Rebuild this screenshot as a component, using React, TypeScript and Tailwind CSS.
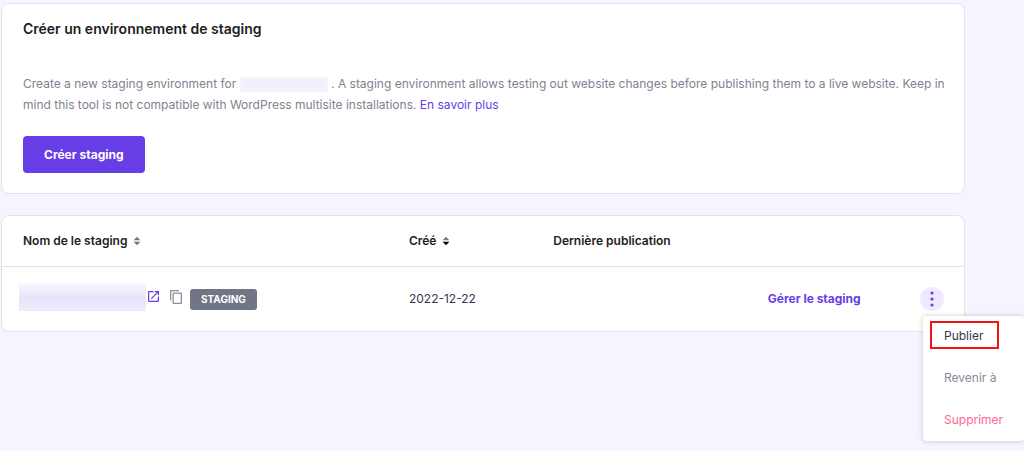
import { useState } from "react";

function SortIcon({ active = false }: { active?: boolean }) {
  return (
    <svg viewBox="0 0 8 10" className="h-2.5 w-2" aria-hidden="true">
      <path d="M4 0.7 7.4 4.2H0.6z" fill="#727586" />
      <path d="M0.6 5.8h6.8L4 9.3z" fill={active ? "#000000" : "#727586"} />
    </svg>
  );
}

function OpenIcon() {
  return (
    <svg viewBox="3 3 18 18" className="size-[11px]" fill="#673de6" aria-hidden="true">
      <path d="M19 19H5V5h7V3H5a2 2 0 0 0-2 2v14a2 2 0 0 0 2 2h14c1.1 0 2-.9 2-2v-7h-2v7zM14 3v2h3.59l-9.83 9.83 1.41 1.41L19 6.41V10h2V3h-7z" />
    </svg>
  );
}

function CopyIcon() {
  return (
    <svg viewBox="2 1 19 22" className="h-[14px] w-3" fill="#8a8c9a" aria-hidden="true">
      <path d="M16 1H4c-1.1 0-2 .9-2 2v14h2V3h12V1zm3 4H8c-1.1 0-2 .9-2 2v14c0 1.1.9 2 2 2h11c1.1 0 2-.9 2-2V7c0-1.1-.9-2-2-2zm0 16H8V7h11v14z" />
    </svg>
  );
}

function RowMenu() {
  const [open, setOpen] = useState(true);
  return (
    <div className="relative size-6">
      <button
        type="button"
        aria-label="Actions"
        aria-expanded={open}
        onClick={() => setOpen(!open)}
        className="flex size-6 items-center justify-center rounded-full bg-[#efe9ff]"
      >
        <svg viewBox="0 0 4 16" className="h-4 w-1" fill="#673de6" aria-hidden="true">
          <circle cx="2" cy="2" r="1.6" />
          <circle cx="2" cy="8" r="1.6" />
          <circle cx="2" cy="14" r="1.6" />
        </svg>
      </button>
      {open && (
        <div className="absolute top-[29px] left-[3px] flex w-[101px] flex-col rounded bg-white shadow-[0_0_5px_rgba(29,30,32,0.22)]">
          <button
            type="button"
            className="mt-[5px] mb-2 ml-[7px] flex h-7 w-[69px] items-center border-2 border-[#f01414] pt-0.5 pl-3 text-[#36344d]"
          >
            Publier
          </button>
          <button type="button" className="flex h-[42px] items-center pl-[21px] text-[#8a8c9a]">
            Revenir à
          </button>
          <button type="button" className="flex h-[42px] items-center pl-[21px] text-[#ff6690]">
            Supprimer
          </button>
        </div>
      )}
    </div>
  );
}

export default function App() {
  return (
    <main className="flex min-h-screen flex-col gap-[21px] bg-[#f4f5ff] pt-[3px] pr-[59px] pl-px font-['Inter','Open_Sans',sans-serif] text-xs text-[#36344d]">
      <section className="rounded-lg border border-[#e3e3ec] bg-white pt-[15px] pr-2 pb-5 pl-[21px]">
        <h1 className="text-sm leading-5 font-semibold text-[#1d1e20]">Créer un environnement de staging</h1>
        <p className="mt-[34px] leading-[21px] text-[#808290]">
          Create a new staging environment for{" "}
          <span className="inline-block h-[15px] w-[88px] bg-[#f1effc] align-middle shadow-[inset_0_0_6px_#faf9ff]" />{" "}
          . A staging environment allows testing out website changes before publishing them to a live website. Keep in
          mind this tool is not compatible with WordPress multisite installations.{" "}
          <a href="#savoir" className="text-[#673de6]">
            En savoir plus
          </a>
        </p>
        <button type="button" className="mt-[21px] h-[37px] rounded bg-[#673de6] px-[21px] font-bold text-white">
          Créer staging
        </button>
      </section>

      <section className="rounded-lg border border-[#e3e3ec] bg-white">
        <table className="w-full table-fixed text-left">
          <thead>
            <tr className="h-[50px] border-b border-[#e3e3ec] text-[#1d1e20]">
              <th className="w-[42.3%] pl-[21px] font-semibold">
                <button type="button" className="flex items-center gap-1.5">
                  Nom de le staging <SortIcon />
                </button>
              </th>
              <th className="w-[15%] font-semibold">
                <button type="button" className="flex items-center gap-1.5">
                  Créé <SortIcon active />
                </button>
              </th>
              <th className="font-semibold">Dernière publication</th>
              <th className="w-[11.4%]" />
              <th className="w-[9%]" />
            </tr>
          </thead>
          <tbody>
            <tr className="h-[65px]">
              <td className="pb-1 pl-[17px]">
                <div className="flex items-center">
                  <span className="h-7 w-[127px] bg-linear-to-b from-[#faf9ff] via-[#e7e3fa] to-[#eeedfd]" />
                  <a href="#site" aria-label="Ouvrir le site" className="ml-0.5">
                    <OpenIcon />
                  </a>
                  <button type="button" aria-label="Copier" className="ml-[11px]">
                    <CopyIcon />
                  </button>
                  <span className="mt-1.5 ml-2 flex h-[21px] items-center rounded-[3px] bg-[#727586] px-[11px] text-[10px] font-bold text-white">
                    STAGING
                  </span>
                </div>
              </td>
              <td>2022-12-22</td>
              <td />
              <td>
                <a href="#gerer" className="font-bold whitespace-nowrap text-[#673de6]">
                  Gérer le staging
                </a>
              </td>
              <td>
                <div className="flex justify-end pr-5">
                  <RowMenu />
                </div>
              </td>
            </tr>
          </tbody>
        </table>
      </section>
    </main>
  );
}
